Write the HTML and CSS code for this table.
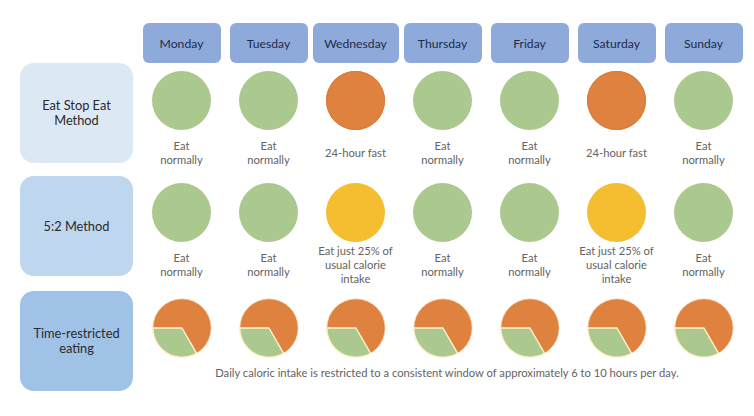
FILE: index.html
```html
<!DOCTYPE html>
<html lang="en">
<head>
<meta charset="utf-8">
<title>Intermittent fasting methods</title>
<link rel="stylesheet" href="styles.css">
</head>
<body>
<div class="chart">
  <div class="header-row">
    <div class="corner"></div>
    <div class="day-col"><div class="day-head">Monday</div></div>
    <div class="day-col"><div class="day-head">Tuesday</div></div>
    <div class="day-col"><div class="day-head wide">Wednesday</div></div>
    <div class="day-col"><div class="day-head">Thursday</div></div>
    <div class="day-col"><div class="day-head">Friday</div></div>
    <div class="day-col"><div class="day-head">Saturday</div></div>
    <div class="day-col"><div class="day-head">Sunday</div></div>
  </div>

  <div class="method-row row-1">
    <div class="method method-1">Eat Stop Eat<br>Method</div>
    <div class="days">
      <div class="day"><div class="dot green"></div><div class="note">Eat<br>normally</div></div>
      <div class="day"><div class="dot green"></div><div class="note">Eat<br>normally</div></div>
      <div class="day"><div class="dot orange"></div><div class="note">24-hour fast</div></div>
      <div class="day"><div class="dot green"></div><div class="note">Eat<br>normally</div></div>
      <div class="day"><div class="dot green"></div><div class="note">Eat<br>normally</div></div>
      <div class="day"><div class="dot orange"></div><div class="note">24-hour fast</div></div>
      <div class="day"><div class="dot green"></div><div class="note">Eat<br>normally</div></div>
    </div>
  </div>

  <div class="method-row row-2">
    <div class="method method-2">5:2 Method</div>
    <div class="days">
      <div class="day"><div class="dot green"></div><div class="note">Eat<br>normally</div></div>
      <div class="day"><div class="dot green"></div><div class="note">Eat<br>normally</div></div>
      <div class="day"><div class="dot yellow"></div><div class="note">Eat just 25% of<br>usual calorie<br>intake</div></div>
      <div class="day"><div class="dot green"></div><div class="note">Eat<br>normally</div></div>
      <div class="day"><div class="dot green"></div><div class="note">Eat<br>normally</div></div>
      <div class="day"><div class="dot yellow"></div><div class="note">Eat just 25% of<br>usual calorie<br>intake</div></div>
      <div class="day"><div class="dot green"></div><div class="note">Eat<br>normally</div></div>
    </div>
  </div>

  <div class="method-row row-3">
    <div class="method method-3">Time-restricted<br>eating</div>
    <div class="days-wrap">
      <div class="days">
        <div class="day"><svg class="pie" viewBox="-30 -30 60 60"><circle r="29.2" class="pie-bg"/><path class="pie-slice" d="M0 0 L-29.2 0 A29.2 29.2 0 0 0 14.6 25.3 Z"/></svg></div>
        <div class="day"><svg class="pie" viewBox="-30 -30 60 60"><circle r="29.2" class="pie-bg"/><path class="pie-slice" d="M0 0 L-29.2 0 A29.2 29.2 0 0 0 14.6 25.3 Z"/></svg></div>
        <div class="day"><svg class="pie" viewBox="-30 -30 60 60"><circle r="29.2" class="pie-bg"/><path class="pie-slice" d="M0 0 L-29.2 0 A29.2 29.2 0 0 0 14.6 25.3 Z"/></svg></div>
        <div class="day"><svg class="pie" viewBox="-30 -30 60 60"><circle r="29.2" class="pie-bg"/><path class="pie-slice" d="M0 0 L-29.2 0 A29.2 29.2 0 0 0 14.6 25.3 Z"/></svg></div>
        <div class="day"><svg class="pie" viewBox="-30 -30 60 60"><circle r="29.2" class="pie-bg"/><path class="pie-slice" d="M0 0 L-29.2 0 A29.2 29.2 0 0 0 14.6 25.3 Z"/></svg></div>
        <div class="day"><svg class="pie" viewBox="-30 -30 60 60"><circle r="29.2" class="pie-bg"/><path class="pie-slice" d="M0 0 L-29.2 0 A29.2 29.2 0 0 0 14.6 25.3 Z"/></svg></div>
        <div class="day"><svg class="pie" viewBox="-30 -30 60 60"><circle r="29.2" class="pie-bg"/><path class="pie-slice" d="M0 0 L-29.2 0 A29.2 29.2 0 0 0 14.6 25.3 Z"/></svg></div>
      </div>
      <p class="caption">Daily caloric intake is restricted to a consistent window of approximately 6 to 10 hours per day.</p>
    </div>
  </div>
</div>
</body>
</html>
```

FILE: styles.css
```css
html, body {
  margin: 0;
  background: #ffffff;
}

body {
  font-family: Lato, "Open Sans", "Liberation Sans", sans-serif;
}

.chart {
  padding: 23px 0 0 20px;
}

.header-row {
  display: flex;
  height: 40px;
}

.corner {
  flex: none;
  width: 118px;
}

.day-col {
  flex: none;
  width: 87px;
  display: flex;
  justify-content: center;
}

.day-head {
  width: 78px;
  height: 40px;
  background: #8eaadb;
  border-radius: 6px;
  display: flex;
  align-items: center;
  justify-content: center;
  color: #1f2b47;
  font-size: 12.2px;
}

.day-head.wide {
  width: 86px;
}

.method-row {
  display: flex;
}

.row-1 {
  height: 113px;
}

.row-2 {
  height: 115px;
}

.method {
  flex: none;
  width: 113px;
  height: 100px;
  margin-right: 5px;
  border-radius: 14px;
  display: flex;
  align-items: center;
  justify-content: center;
  text-align: center;
  font-size: 12.8px;
  line-height: 15px;
  color: #2a2a2a;
}

.method-1 {
  background: #dde8f5;
}

.method-2 {
  background: #bed6ee;
}

.method-3 {
  background: #9fc2e6;
}

.days {
  display: flex;
}

.day {
  flex: none;
  width: 87px;
  display: flex;
  flex-direction: column;
  align-items: center;
  padding-top: 7px;
}

.row-1 .day {
  padding-top: 8px;
}

.dot {
  width: 59px;
  height: 59px;
  border-radius: 50%;
}

.green {
  background: #abc98e;
}

.orange {
  background: #e0823f;
  box-shadow: inset 0 0 0 1px #d87a38;
}

.yellow {
  background: #f5bd30;
}

.note {
  height: 42px;
  margin-top: 2px;
  display: flex;
  align-items: center;
  text-align: center;
  font-size: 11.2px;
  line-height: 14px;
  color: #636363;
}

.pie {
  display: block;
  width: 60px;
  height: 60px;
}

.pie-bg {
  fill: #e0823f;
  stroke: #fbe3c6;
  stroke-width: 0.8;
}

.pie-slice {
  fill: #abc98e;
  stroke: #fff2cc;
  stroke-width: 1.4;
  stroke-linejoin: round;
}

.caption {
  margin: 8px 0 0 0;
  padding-left: 9px;
  text-align: center;
  font-size: 11.2px;
  line-height: 14px;
  color: #636363;
}
```
